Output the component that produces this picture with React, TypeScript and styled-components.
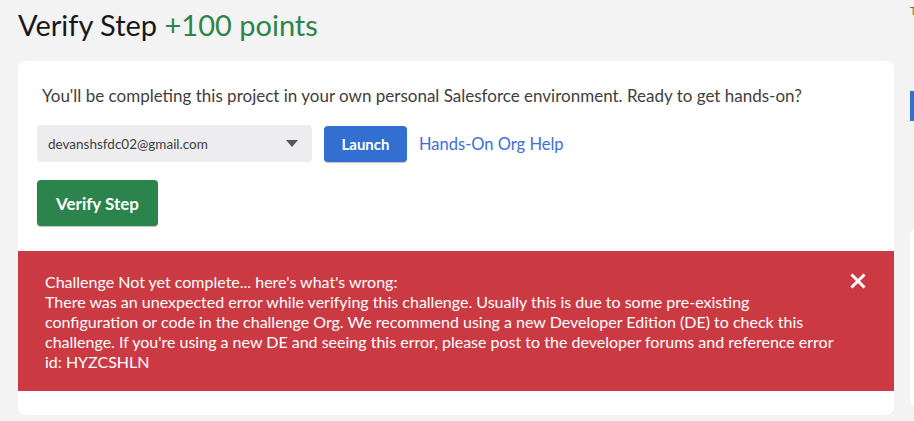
import * as React from 'react'
import styled, {createGlobalStyle} from 'styled-components'

const Global = createGlobalStyle`
  html, body {
    margin: 0;
    padding: 0;
    background: #f3f3f3;
    font-family: 'Lato', 'Open Sans', sans-serif;
    color: #3e3e3c;
  }
`

const Page = styled.div`
  display: flex;
  gap: 16px;
  width: 914px;
  height: 421px;
  overflow: hidden;
  padding-left: 18px;
  box-sizing: border-box;
`

const Main = styled.main`
  flex: 0 0 876px;
  display: flex;
  flex-direction: column;
`

const Title = styled.h1`
  margin: 0;
  padding-top: 6px;
  height: 61px;
  box-sizing: border-box;
  font-size: 29px;
  line-height: 38px;
  font-weight: 400;
  color: #181818;
`

const Points = styled.span`
  color: #2e844a;
`

const Card = styled.section`
  background: #fff;
  border-radius: 8px;
  padding: 24px 0 24px;
  display: flex;
  flex-direction: column;
`

const Intro = styled.p`
  margin: 0 0 0 24px;
  font-size: 17px;
  line-height: 22px;
  color: #3e3e3c;
`

const OrgRow = styled.div`
  display: flex;
  align-items: center;
  gap: 12px;
  margin: 18px 0 0 19px;
`

const Select = styled.div`
  width: 275px;
  height: 37px;
  box-sizing: border-box;
  padding: 0 11px;
  display: flex;
  align-items: center;
  justify-content: space-between;
  background: #ededf0;
  border-radius: 4px;
  font-size: 13.5px;
  color: #3e3e3c;
`

const Caret = styled.span`
  width: 0;
  height: 0;
  border-left: 6px solid transparent;
  border-right: 6px solid transparent;
  border-top: 7px solid #555;
  margin-right: 3px;
`

const Button = styled.button<{$tone: 'blue' | 'green'}>`
  border: 0;
  border-radius: 4px;
  color: #fff;
  font-family: inherit;
  font-weight: 700;
  cursor: pointer;
  background: ${p => (p.$tone === 'blue' ? '#326fd1' : '#2a844c')};
  font-size: ${p => (p.$tone === 'blue' ? '15px' : '17px')};
  height: ${p => (p.$tone === 'blue' ? '36px' : '46px')};
  width: ${p => (p.$tone === 'blue' ? '83px' : '121px')};
  padding: 0;
  box-shadow: 0 1px 1px rgba(0, 0, 0, 0.25);
`

const HelpLink = styled.a`
  color: #3d6fd6;
  font-size: 16.5px;
  text-decoration: none;
`

const VerifyRow = styled.div`
  margin: 18px 0 0 19px;
`

const ErrorBox = styled.div`
  margin-top: 25px;
  background: #cb3a43;
  color: #fff;
  display: flex;
  justify-content: space-between;
  align-items: flex-start;
  padding: 21px 28px 19px 27px;
  font-size: 16px;
  line-height: 20px;
  height: 140px;
  box-sizing: border-box;
`

const ErrorText = styled.div``

const Close = styled.button`
  border: 0;
  background: none;
  padding: 0;
  margin-top: 1px;
  width: 16px;
  height: 16px;
  cursor: pointer;
`

const Side = styled.aside`
  flex: 1;
  display: flex;
  flex-direction: column;
`

const SideLabel = styled.div`
  font-size: 11px;
  line-height: 14px;
  padding-top: 4px;
  color: #8a6d2a;
`

const SideBar = styled.div`
  margin-top: 73px;
  width: 4px;
  height: 30px;
  background: #326fd1;
`

const SideCard = styled.div`
  margin-top: 108px;
  height: 177px;
  background: #fff;
  border-radius: 6px 0 0 6px;
`

const App = () => {
  return (
    <>
      <Global />
      <Page>
        <Main>
          <Title>
            Verify Step <Points>+100 points</Points>
          </Title>
          <Card>
            <Intro>
              You'll be completing this project in your own personal Salesforce environment. Ready to get hands-on?
            </Intro>
            <OrgRow>
              <Select>
                devanshsfdc02@gmail.com
                <Caret />
              </Select>
              <Button $tone="blue">Launch</Button>
              <HelpLink href="#">Hands-On Org Help</HelpLink>
            </OrgRow>
            <VerifyRow>
              <Button $tone="green">Verify Step</Button>
            </VerifyRow>
            <ErrorBox>
              <ErrorText>
                Challenge Not yet complete... here's what's wrong:
                <br />
                There was an unexpected error while verifying this challenge. Usually this is due to some pre-existing
                <br />
                configuration or code in the challenge Org. We recommend using a new Developer Edition (DE) to check this
                <br />
                challenge. If you're using a new DE and seeing this error, please post to the developer forums and reference error
                <br />
                id: HYZCSHLN
              </ErrorText>
              <Close aria-label="Close">
                <svg width="16" height="16" viewBox="0 0 16 16">
                  <path d="M2.5 2.5 L13.5 13.5 M13.5 2.5 L2.5 13.5" stroke="#fff" strokeWidth="3" strokeLinecap="square" />
                </svg>
              </Close>
            </ErrorBox>
          </Card>
        </Main>
        <Side>
          <SideLabel>T</SideLabel>
          <SideBar />
          <SideCard />
        </Side>
      </Page>
    </>
  )
}

export default App
